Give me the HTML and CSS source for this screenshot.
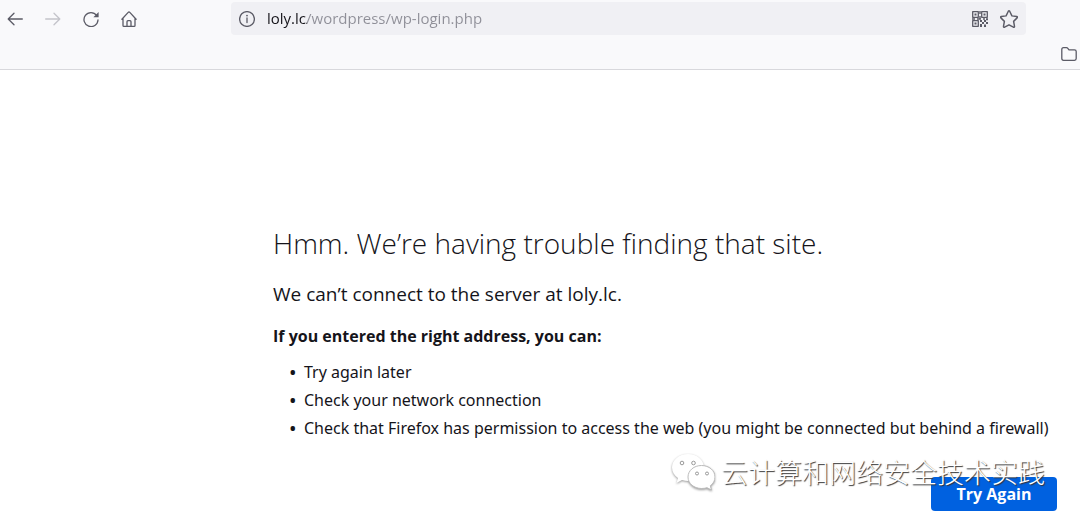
FILE: index.html
```html
<!DOCTYPE html>
<html lang="en">

<head>
    <meta charset="UTF-8">
    <meta name="viewport" content="width=device-width, initial-scale=1.0">
    <title>Server Not Found</title>
    <link rel="stylesheet" href="styles.css">
</head>

<body>
    <header class="toolbar">
        <div class="nav-bar">
            <div class="nav-buttons">
                <button type="button" class="icon-button" aria-label="Back">
                    <svg class="icon" viewBox="0 0 16 16"><path d="M15.3 8H1.2M7 2.2 1.2 8 7 13.8" /></svg>
                </button>
                <button type="button" class="icon-button" aria-label="Forward" disabled>
                    <svg class="icon" viewBox="0 0 16 16"><path d="M.7 8h14.1M9 2.2 14.8 8 9 13.8" /></svg>
                </button>
                <button type="button" class="icon-button" aria-label="Reload">
                    <svg class="icon" viewBox="0 0 16 16"><path d="M13.6 4.4A7 7 0 1 0 15 9" /><path class="solid" d="M15.6 1v5.2h-5.2z" /></svg>
                </button>
                <button type="button" class="icon-button" aria-label="Home">
                    <svg class="icon" viewBox="0 0 16 16"><path d="M.9 8.2 7.2 1.4q.8-.8 1.6 0l6.3 6.8M2 7.2v7.2q0 .9.9.9h10.2q.9 0 .9-.9V7.2M6 15.3v-4.6q0-1 1-1h2q1 0 1 1v4.6" /></svg>
                </button>
            </div>
            <form class="url-bar">
                <button type="button" class="icon-button" aria-label="Site information">
                    <svg class="icon" viewBox="0 0 16 16"><circle cx="8" cy="8" r="7.4" /><path d="M8 7v4.6" /><circle class="solid" cx="8" cy="4.6" r=".9" /></svg>
                </button>
                <input type="text" class="url-input" aria-label="Address" value="loly.lc/wordpress/wp-login.php">
                <button type="button" class="icon-button" aria-label="QR code">
                    <svg class="icon" viewBox="0 0 16 16">
                        <path d="M.7.7h5.6v5.6H.7zM9.7.7h5.6v5.6H9.7zM.7 9.7h5.6v5.6H.7z" />
                        <path class="solid" d="M2.5 2.5h2v2h-2zM11.5 2.5h2v2h-2zM2.5 11.5h2v2h-2zM7.3 0h1.4v3H7.3zM7.3 5h1.4v3H7.3zM0 7.3h3v1.4H0zM5 7.3h4v1.4H5zM11 7.3h2v1.4h-2zM14 7.3h2v2h-2zM8 9h2v2H8zM10 11h2v2h-2zM12 9h2v2h-2zM14 11h2v2h-2zM8 13h2v3H8zM12 13.5h2V16h-2z" />
                    </svg>
                </button>
                <button type="button" class="icon-button" aria-label="Bookmark this page">
                    <svg class="icon star" viewBox="0 0 16 16"><path d="M7.4 1.1q.6-.9 1.2 0l2 4.1 4.2.6q1.1.3.4 1.2l-3.1 3.1.8 4.5q0 1.1-1 .7L8 13.2l-3.9 2.1q-1 .4-1-.7l.8-4.5L.8 7q-.7-.9.4-1.2l4.2-.6z" /></svg>
                </button>
            </form>
        </div>
        <div class="bookmarks-bar">
            <button type="button" class="icon-button" aria-label="Other bookmarks">
                <svg class="icon" viewBox="0 0 16 16"><path d="M.8 12.6V3.4q0-1.7 1.7-1.7h3q.8 0 1.3.6l1.2 1.5h5.5q1.7 0 1.7 1.7v7.1q0 1.7-1.7 1.7h-11q-1.7 0-1.7-1.7z" /></svg>
            </button>
        </div>
    </header>

    <main class="error-page">
        <h1>Hmm. We’re having trouble finding that site.</h1>
        <p class="message">We can’t connect to the server at loly.lc.</p>
        <p class="hint">If you entered the right address, you can:</p>
        <ul>
            <li>Try again later</li>
            <li>Check your network connection</li>
            <li>Check that Firefox has permission to access the web (you might be connected but behind a firewall)</li>
        </ul>
        <div class="actions">
            <button type="button" class="try-again">Try Again</button>
            <div class="watermark" lang="zh-CN">
                <svg class="wechat" viewBox="0 0 44 38">
                    <path d="M17 1C8 1 1 7 1 14.5c0 4.5 2.4 8 6 10.5L5.5 30l5.5-3q3 1 6.5 1C26 28 33 22 33 14.5S26 1 17 1z" />
                    <path class="front" d="M30.5 12.5C23 12.5 17 17.5 17 24s6 11.5 13.5 11.5q3 0 5.5-.8l4.5 2.3-1.2-4.2c3-2.2 4.7-5.2 4.7-8.8 0-6.5-6-11.5-13.5-11.5z" />
                    <circle class="eye" cx="11" cy="10" r="1.8" /><circle class="eye" cx="22.5" cy="10" r="1.8" />
                    <circle class="eye" cx="26" cy="20.5" r="1.5" /><circle class="eye" cx="36" cy="20.5" r="1.5" />
                </svg>
                <span>云计算和网络安全技术实践</span>
            </div>
        </div>
    </main>
</body>

</html>
```
FILE: styles.css
```css
body {
    margin: 0;
    background-color: #fff;
    color: #15141a;
    font-family: "Open Sans", "Noto Sans", sans-serif;
    font-size: 16px;
}

button {
    border: none;
    cursor: pointer;
    font-family: inherit;
}

.toolbar {
    background-color: #f9f9fb;
    border-bottom: 1px solid #d8d8dc;
}

.nav-bar {
    display: flex;
    align-items: center;
    padding: 2px 54px 0 7px;
}

.nav-buttons {
    display: flex;
    gap: 22px;
    margin-right: 94px;
}

.icon-button {
    display: flex;
    padding: 0;
    background: none;
    color: #5b5b66;
}

.icon-button:disabled {
    color: #c4c4ca;
}

.icon {
    width: 16px;
    height: 16px;
    fill: none;
    stroke: currentColor;
    stroke-width: 1.3;
    stroke-linecap: round;
    stroke-linejoin: round;
}

.icon .solid {
    fill: currentColor;
    stroke: none;
}

.star {
    width: 18px;
    height: 18px;
}

.url-bar {
    display: flex;
    flex: 1;
    align-items: center;
    gap: 12px;
    height: 33px;
    padding: 0 8px;
    border-radius: 4px;
    background-color: #f0f0f4;
}

/* the host is darker than the path */
.url-input {
    flex: 1;
    min-width: 0;
    padding: 0 0 2px;
    border: none;
    outline: none;
    background: linear-gradient(to right, #15141a 40px, #8f8f98 40px);
    background-clip: text;
    -webkit-background-clip: text;
    color: transparent;
    font-family: inherit;
    font-size: 15px;
}

.bookmarks-bar {
    display: flex;
    justify-content: flex-end;
    align-items: center;
    height: 30px;
    padding: 4px 3px 0 0;
}

.error-page {
    padding: 152px 19px 10px 273px;
}

h1 {
    margin: 0 0 16px;
    font-size: 28px;
    font-weight: 300;
    line-height: 42px;
}

.message {
    margin: 0 0 14px;
    font-size: 19px;
    line-height: 28px;
}

.hint {
    margin: 0 0 8px;
    font-weight: 700;
    line-height: 28px;
}

ul {
    margin: 0;
    padding-left: 31px;
    font-family: "Noto Sans", sans-serif;
    white-space: nowrap;
}

li {
    line-height: 28px;
}

li::marker {
    content: "•\00a0\00a0";
    font-weight: 700;
}

.actions {
    display: flex;
    justify-content: flex-end;
    position: relative;
    margin-top: 35px;
    padding-right: 4px;
}

.try-again {
    width: 126px;
    height: 34px;
    border-radius: 4px;
    background-color: #0061e0;
    color: #fff;
    font-size: 16px;
    font-weight: 700;
}

.watermark {
    display: flex;
    align-items: center;
    gap: 6px;
    position: absolute;
    right: 16px;
    top: -26px;
    color: #fff;
    font-family: "Noto Sans CJK SC", sans-serif;
    font-size: 27px;
    font-weight: 300;
    line-height: 42px;
    text-shadow: 1px 1px 1px #333;
    white-space: nowrap;
    pointer-events: none;
}

.wechat {
    width: 44px;
    height: 38px;
    fill: #fff;
    filter: drop-shadow(0 1px 1px #999);
}

.wechat .front {
    stroke: #bbb;
    stroke-width: 1;
}

.wechat .eye {
    fill: #fff;
    stroke: #999;
    stroke-width: 1;
}
```
